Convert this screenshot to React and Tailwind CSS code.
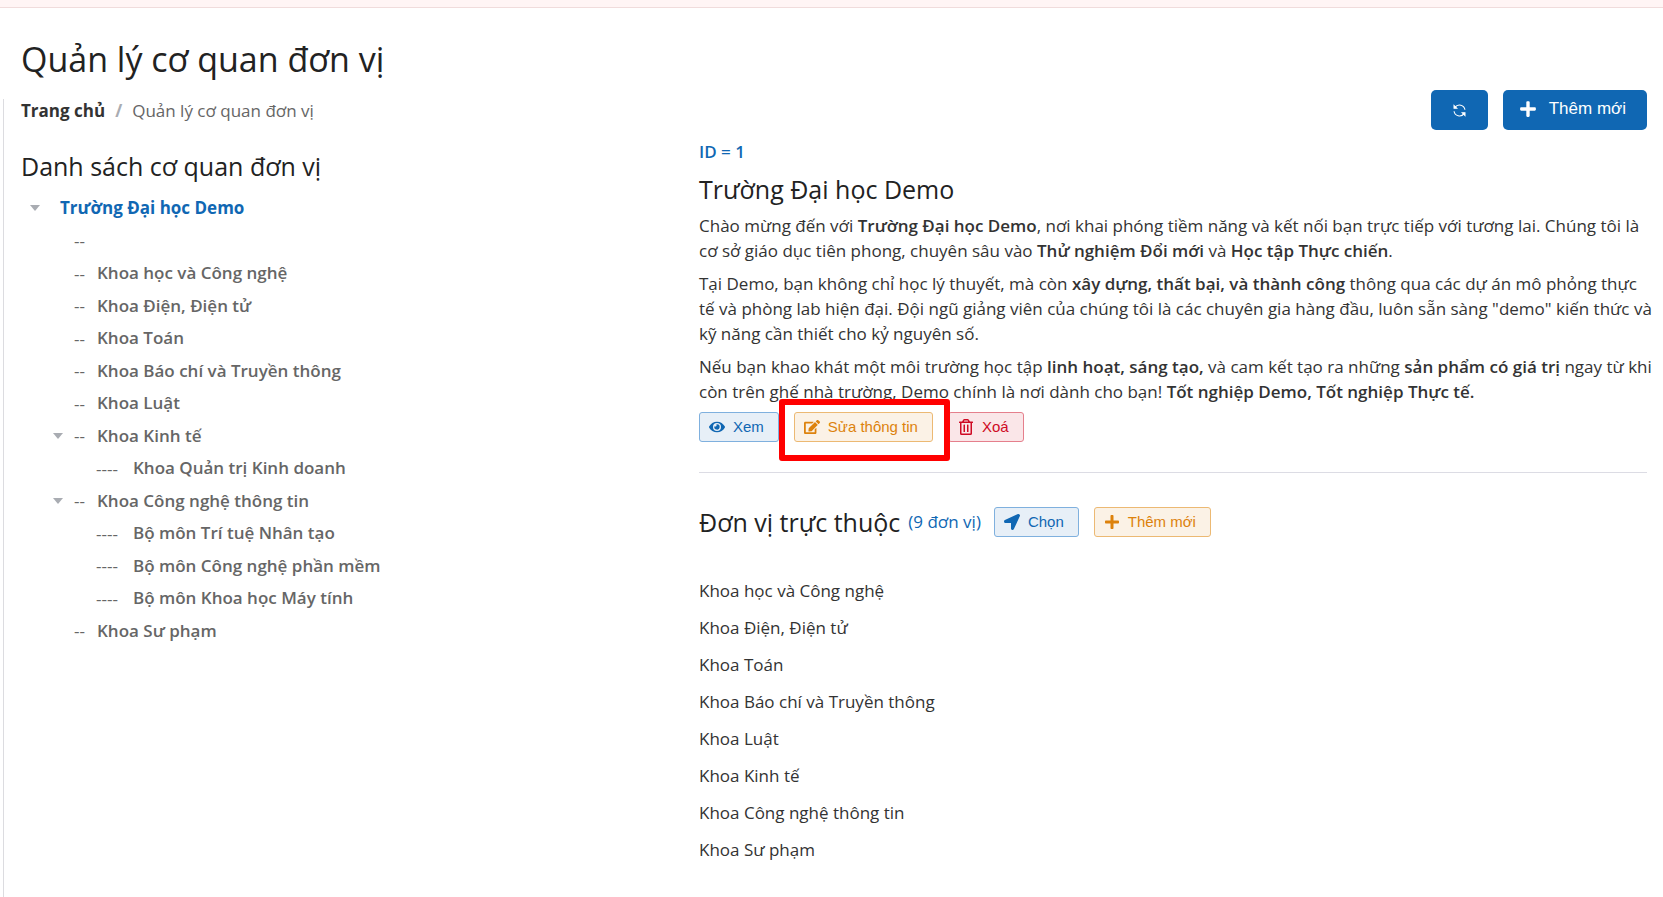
import React from "react";
import { FaPlus, FaEye, FaEdit, FaRegTrashAlt, FaLocationArrow } from "react-icons/fa";

const tree = [
  { level: 1, label: "" },
  { level: 1, label: "Khoa học và Công nghệ" },
  { level: 1, label: "Khoa Điện, Điện tử" },
  { level: 1, label: "Khoa Toán" },
  { level: 1, label: "Khoa Báo chí và Truyền thông" },
  { level: 1, label: "Khoa Luật" },
  { level: 1, label: "Khoa Kinh tế", open: true },
  { level: 2, label: "Khoa Quản trị Kinh doanh" },
  { level: 1, label: "Khoa Công nghệ thông tin", open: true },
  { level: 2, label: "Bộ môn Trí tuệ Nhân tạo" },
  { level: 2, label: "Bộ môn Công nghệ phần mềm" },
  { level: 2, label: "Bộ môn Khoa học Máy tính" },
  { level: 1, label: "Khoa Sư phạm" },
];

const units = [
  "Khoa học và Công nghệ",
  "Khoa Điện, Điện tử",
  "Khoa Toán",
  "Khoa Báo chí và Truyền thông",
  "Khoa Luật",
  "Khoa Kinh tế",
  "Khoa Công nghệ thông tin",
  "Khoa Sư phạm",
];

const tones = {
  blue: "border-[#7fb0de] bg-[#e7eff7] text-[#1067b3]",
  orange: "border-[#ecb973] bg-[#fbf2e6] text-[#dd820c]",
  red: "border-[#e57f8c] bg-[#fae6e8] text-[#cf0a24]",
};

function Caret() {
  return (
    <svg viewBox="0 0 10 6" className="h-[6px] w-[10px] fill-[#a9acb2]" aria-hidden="true">
      <path d="M0 0h10L5 6z" />
    </svg>
  );
}

function Strong({ children }) {
  return <strong className="font-semibold">{children}</strong>;
}

function SmallButton({ tone, icon, children }) {
  return (
    <button
      type="button"
      className={`flex h-[30px] items-center gap-2 rounded-[3px] border pl-[9px] pr-[14px] font-['Liberation_Sans',sans-serif] text-[15px] ${tones[tone]}`}
    >
      <span className="flex w-4 justify-center text-base">{icon}</span>
      {children}
    </button>
  );
}

export default function App() {
  return (
    <div className="flex min-h-screen flex-col bg-white font-['Open_Sans',sans-serif] text-[17px] text-[#333]">
      <div className="h-2 border-b border-[#f0dcdc] bg-[#fff5f5]" />
      <header className="px-[21px] pt-[26px]">
        <h1 className="text-[34px] leading-[50px] text-[#222]">Quản lý cơ quan đơn vị</h1>
      </header>
      <div className="ml-[3px] mt-[15px] flex-1 border-l border-[#dcdce0] pl-[17px] pr-4">
        <div className="flex h-6 items-center justify-between">
          <nav aria-label="Breadcrumb">
            <ol className="flex gap-[10px]">
              <li><a href="#" className="font-bold text-[#333]">Trang chủ</a></li>
              <li className="font-bold text-[#a9acb2]" aria-hidden="true">/</li>
              <li className="text-[#666]">Quản lý cơ quan đơn vị</li>
            </ol>
          </nav>
          <div className="-mt-[2px] flex gap-[15px] font-['Liberation_Sans',sans-serif] text-[17px] text-white">
            <button type="button" aria-label="Tải lại" className="flex h-10 w-[57px] items-center justify-center rounded-[5px] bg-[#1067b3]">
              <svg viewBox="0 0 16 16" className="size-[15px] fill-none stroke-white" strokeWidth="1.2" aria-hidden="true">
                <path d="M13.8 7.2A5.9 5.9 0 0 0 3.2 4.6M2.2 8.8a5.9 5.9 0 0 0 10.6 2.6" />
                <path className="fill-white" d="M2.2 2.8v2.8H5zM13.8 13.2v-2.8H11z" />
              </svg>
            </button>
            <button type="button" className="flex h-10 items-center gap-3 rounded-[5px] bg-[#1067b3] pb-[2px] pl-4 pr-[21px]">
              <FaPlus className="size-[18px]" />
              Thêm mới
            </button>
          </div>
        </div>
        <div className="flex">
          <section className="w-[678px] shrink-0">
            <h2 className="mt-[26px] text-[25px] leading-[34px] text-[#222]">Danh sách cơ quan đơn vị</h2>
            <div className="mt-[13px] flex items-center gap-5 pl-[9px] leading-6">
              <Caret />
              <a href="#" className="font-bold text-[#1067b3]">Trường Đại học Demo</a>
            </div>
            <ul className="pt-px leading-normal">
              {tree.map((n, i) => (
                <li key={i} className={`flex items-center pt-[7px] ${n.level === 2 ? "pl-[75px]" : "pl-[32px]"}`}>
                  {n.level === 1 && <span className="w-[21px] shrink-0">{n.open && <Caret />}</span>}
                  <span className={`shrink-0 text-[#666] ${n.level === 2 ? "w-[37px]" : "w-[23px]"}`}>{n.level === 2 ? "----" : "--"}</span>
                  <a href="#" className="font-semibold leading-6 text-[#666]">{n.label}</a>
                </li>
              ))}
            </ul>
          </section>
          <section className="min-w-0 flex-1">
            <p className="mt-[17px] font-semibold leading-6 text-[#1067b3]">ID = 1</p>
            <h2 className="mt-[8px] text-[25px] leading-[34px] text-[#222]">Trường Đại học Demo</h2>
            <div className="-mr-4 mt-[7px] flex flex-col gap-2 leading-[25px]">
              <p>
                Chào mừng đến với <Strong>Trường Đại học Demo</Strong>, nơi khai phóng tiềm năng và kết nối bạn trực tiếp với tương lai. Chúng tôi là<br />
                cơ sở giáo dục tiên phong, chuyên sâu vào <Strong>Thử nghiệm Đổi mới</Strong> và <Strong>Học tập Thực chiến</Strong>.
              </p>
              <p>
                Tại Demo, bạn không chỉ học lý thuyết, mà còn <Strong>xây dựng, thất bại, và thành công</Strong> thông qua các dự án mô phỏng thực<br />
                tế và phòng lab hiện đại. Đội ngũ giảng viên của chúng tôi là các chuyên gia hàng đầu, luôn sẵn sàng "demo" kiến thức và<br />
                kỹ năng cần thiết cho kỷ nguyên số.
              </p>
              <p>
                Nếu bạn khao khát một môi trường học tập <Strong>linh hoạt, sáng tạo,</Strong> và cam kết tạo ra những <Strong>sản phẩm có giá trị</Strong> ngay từ khi<br />
                còn trên ghế nhà trường, Demo chính là nơi dành cho bạn! <Strong>Tốt nghiệp Demo, Tốt nghiệp Thực tế.</Strong>
              </p>
            </div>
            <div className="mt-2 flex gap-[15px]">
              <SmallButton tone="blue" icon={<FaEye />}>Xem</SmallButton>
              <div className="relative">
                <SmallButton tone="orange" icon={<FaEdit />}>Sửa thông tin</SmallButton>
                <div className="pointer-events-none absolute -left-[15px] -right-[17px] -top-[13px] -bottom-[19px] rounded-[3px] border-[6px] border-[#ff0000]" />
              </div>
              <SmallButton tone="red" icon={<FaRegTrashAlt />}>Xoá</SmallButton>
            </div>
            <hr className="mt-[30px] border-[#dcdce4]" />
            <div className="mt-[32px] flex items-center">
              <h2 className="text-[25px] leading-[34px] text-[#222]">Đơn vị trực thuộc</h2>
              <span className="ml-2 text-[#1067b3]">(9 đơn vị)</span>
              <div className="ml-[13px] flex gap-[15px]">
                <SmallButton tone="blue" icon={<FaLocationArrow />}>Chọn</SmallButton>
                <SmallButton tone="orange" icon={<FaPlus />}>Thêm mới</SmallButton>
              </div>
            </div>
            <ul className="mt-[33px]">
              {units.map((u) => (
                <li key={u} className="leading-[37px]">{u}</li>
              ))}
            </ul>
          </section>
        </div>
      </div>
    </div>
  );
}
